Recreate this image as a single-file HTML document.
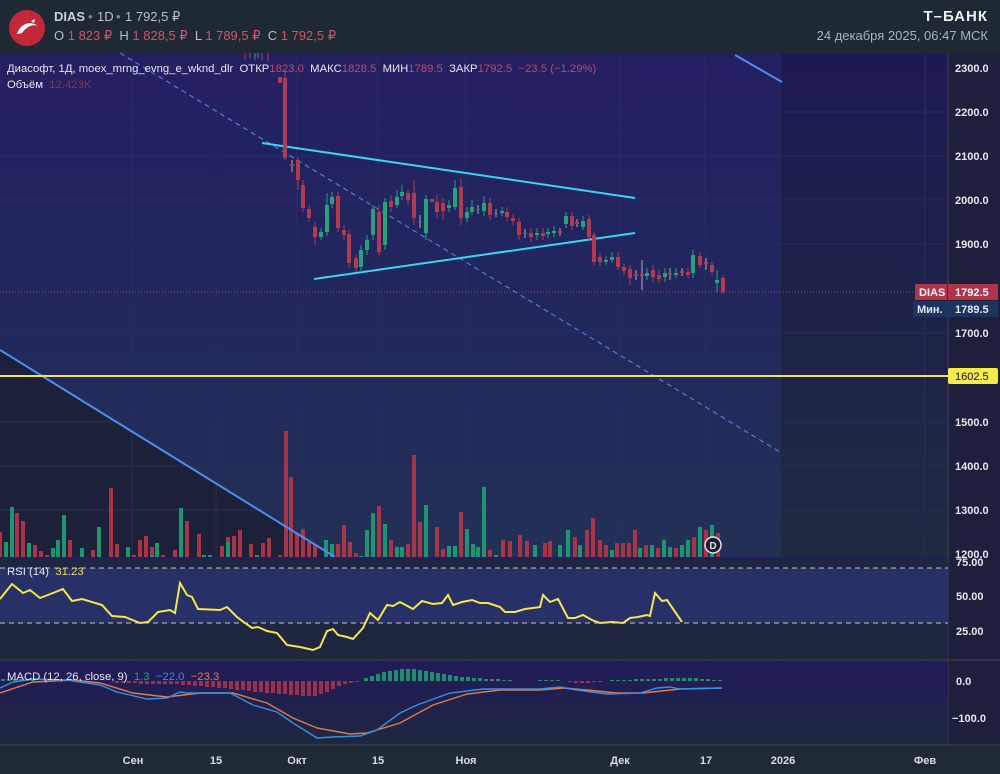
<!DOCTYPE html>
<html><head><meta charset="utf-8"><style>
body{margin:0;width:1000px;height:774px;overflow:hidden;background:#1f2a35;font-family:"Liberation Sans","DejaVu Sans",sans-serif}
svg{display:block}
text{white-space:pre}
</style></head><body>
<svg width="1000" height="774" xmlns="http://www.w3.org/2000/svg" font-family="Liberation Sans, DejaVu Sans, sans-serif" xml:space="preserve">
<defs>
<linearGradient id="mg" x1="0" y1="0" x2="0" y2="1">
<stop offset="0" stop-color="#241f63"/><stop offset="0.45" stop-color="#22265e"/><stop offset="1" stop-color="#223055"/>
</linearGradient>
<linearGradient id="fg" x1="0" y1="0" x2="0" y2="1">
<stop offset="0" stop-color="#1d1a52"/><stop offset="1" stop-color="#1f2a40"/>
</linearGradient>
<linearGradient id="mac" x1="0" y1="0" x2="0" y2="1">
<stop offset="0" stop-color="#211a5a"/><stop offset="1" stop-color="#1e2840"/>
</linearGradient>
</defs>
<rect x="0" y="0" width="1000" height="53" fill="#1f2933"/>
<circle cx="27" cy="28" r="18" fill="#c2283a"/>
<path d="M17 34 C20 24 30 20 38 26 C33 24 27 26 22 33 Z" fill="#fff"/>
<path d="M31 21 l4 -2 l-1 4z" fill="#fff"/>
<text x="54" y="21" font-size="13" font-weight="bold" fill="#c9cfd6">DIAS</text>
<text x="88" y="21" font-size="13" fill="#7f8a95">•</text>
<text x="97" y="21" font-size="13" fill="#b7bec6">1D</text>
<text x="116" y="21" font-size="13" fill="#7f8a95">•</text>
<text x="125" y="21" font-size="13" fill="#b7bec6">1 792,5 ₽</text>
<text x="54" y="40" font-size="13" fill="#b7bec6">O<tspan fill="#d45468"> 1 823 ₽</tspan>  H<tspan fill="#d45468"> 1 828,5 ₽</tspan>  L<tspan fill="#d45468"> 1 789,5 ₽</tspan>  C<tspan fill="#d45468"> 1 792,5 ₽</tspan></text>
<text x="988" y="21" font-size="15" font-weight="bold" fill="#eef0f2" text-anchor="end" letter-spacing="1">Т–БАНК</text>
<text x="988" y="40" font-size="13" fill="#aab3bd" text-anchor="end">24 декабря 2025, 06:47 МСК</text>

<rect x="0" y="53" width="948" height="504" fill="url(#mg)"/>
<rect x="780" y="53" width="168" height="504" fill="url(#fg)"/>
<polygon points="0,350 335,557 0,557" fill="#1d2039"/>
<rect x="948" y="53" width="52" height="692" fill="#1d1f3c"/>
<line x1="948" y1="53" x2="948" y2="774" stroke="#3a4258"/>
<g stroke="#2a3064" stroke-width="1" opacity="0.7">
<line x1="0" y1="112" x2="948" y2="112"/><line x1="0" y1="156" x2="948" y2="156"/><line x1="0" y1="200" x2="948" y2="200"/><line x1="0" y1="244" x2="948" y2="244"/><line x1="0" y1="333" x2="948" y2="333"/><line x1="0" y1="422" x2="948" y2="422"/><line x1="0" y1="466" x2="948" y2="466"/><line x1="0" y1="510" x2="948" y2="510"/>
<line x1="132" y1="53" x2="132" y2="745"/><line x1="216" y1="53" x2="216" y2="745"/><line x1="297" y1="53" x2="297" y2="745"/><line x1="378" y1="53" x2="378" y2="745"/><line x1="466" y1="53" x2="466" y2="745"/><line x1="620" y1="53" x2="620" y2="745"/><line x1="705" y1="53" x2="705" y2="745"/><line x1="780" y1="53" x2="780" y2="745"/><line x1="925" y1="53" x2="925" y2="745"/>
</g>

<path stroke="#a83448" stroke-width="4" d="M0 557V532M17 557V513M23 557V521M35 557V545M41 557V551M47 557V555M70 557V540M93 557V550M111 557V488M117 557V544M134 557V555M140 557V540M146 557V536M152 557V547M163 557V555M175 557V550M187 557V521M199 557V534M222 557V546M228 557V537M234 557V536M240 557V530M251 557V544M263 557V543M269 557V538M280 557V555M286 557V431M291 557V477M297 557V533M303 557V529M309 557V542M315 557V545M338 557V544M344 557V525M350 557V542M356 557V553M379 557V506M391 557V540M408 557V544M414 557V455M420 557V522M437 557V527M443 557V549M461 557V512M473 557V548M490 557V550M503 557V540M510 557V541M520 557V535M527 557V541M545 557V543M550 557V541M575 557V537M587 557V530M593 557V518M600 557V540M606 557V545M617 557V543M623 557V543M629 557V543M635 557V530M646 557V545M658 557V548M676 557V548M694 557V537M706 557V530M718 557V533"/>
<path stroke="#1f9470" stroke-width="4" d="M6 557V542M12 557V507M29 557V543M53 557V548M58 557V540M64 557V515M82 557V548M99 557V527M128 557V547M152 557V555M157 557V543M181 557V508M204 557V555M210 557V555M228 557V542M257 557V555M326 557V540M332 557V544M361 557V556M367 557V530M373 557V513M385 557V524M397 557V547M402 557V547M426 557V505M449 557V546M455 557V546M467 557V529M473 557V544M478 557V547M484 557V487M496 557V555M535 557V545M560 557V545M568 557V530M580 557V545M612 557V550M640 557V548M652 557V545M664 557V540M670 557V547M682 557V545M688 557V540M700 557V527M712 557V525"/>
<circle cx="713" cy="545" r="8" fill="#1a1f2e" stroke="#e6e6e6" stroke-width="1.5"/>
<text x="713" y="549" font-size="10" font-weight="bold" fill="#e6e6e6" text-anchor="middle">D</text>

<line x1="120" y1="53" x2="780" y2="452" stroke="#4f7fd8" stroke-width="1.2" stroke-dasharray="5,4"/>
<line x1="0" y1="350" x2="335" y2="557" stroke="#4b8ef0" stroke-width="2"/>
<line x1="735" y1="55" x2="782" y2="82" stroke="#4b8ef0" stroke-width="2"/>
<line x1="262" y1="143" x2="635" y2="198" stroke="#38d6f0" stroke-width="2"/>
<line x1="314" y1="279" x2="635" y2="233" stroke="#38d6f0" stroke-width="2"/>
<line x1="0" y1="292" x2="915" y2="292" stroke="#b04058" stroke-width="1" stroke-dasharray="1,2"/>

<g stroke-width="1">
<path stroke="#b03a4f" d="M285 70V160M298 158V190M303 180V212M309 205V222M315 222V245M338 192V232M344 225V240M349 230V268M356 255V272M379 205V255M391 195V212M408 190V205M414 180V225M437 195V218M443 198V220M461 178V225M490 198V220M507 207V222M513 214V225M519 218V240M531 228V242M543 228V240M572 212V230M589 215V240M594 232V266M600 253V266M618 252V270M624 263V275M630 265V285M653 265V282M659 270V283M688 268V278M700 252V268M712 262V275M723 275V294"/>
<path stroke="#26a17a" d="M321 228V240M327 193V236M332 192V208M361 245V272M367 235V255M373 205V240M385 198V250M397 190V208M402 185V200M426 195V240M449 200V212M455 180V210M467 207V222M472 200V215M484 196V216M502 207V216M537 228V240M548 228V238M554 226V237M566 212V228M583 216V230M606 256V265M612 252V263M647 268V280M665 268V282M676 268V278M693 250V278M717 270V292"/>
<path stroke="#aab" d="M292 160V172M420 215V228M478 205V214M496 209V217M525 229V238M560 228V236M577 219V227M636 270V280M642 260V290M670 268V280M682 268V276M706 258V270"/>
</g>
<g stroke-width="4">
<path stroke="#b03a4f" d="M280 77V83M285 78V158M292 164V166M298 160V180M303 185V208M309 209V218M315 227V237M338 196V228M344 230V235M349 234V263M356 258V268M379 212V252M391 201V207M408 193V200M414 193V218M420 221V222M432 199V202M437 202V212M443 203V211M461 187V218M478 209V210M490 203V215M496 213V214M507 212V217M513 218V221M519 222V235M525 233V234M531 233V237M543 233V236M560 231V233M572 216V226M577 222V224M589 219V237M594 235V262M600 257V262M618 257V267M624 267V271M630 269V278M636 274V276M642 274V276M653 270V277M659 275V279M670 273V275M682 271V273M688 272V275M700 256V265M706 262V264M712 265V272M723 278V292"/>
<path stroke="#26a17a" d="M321 232V237M327 205V232M332 197V204M361 250V267M367 240V250M373 209V235M385 202V245M397 197V205M402 192V196M426 199V233M449 205V208M455 188V207M467 212V218M472 207V212M484 203V211M502 211V213M537 233V235M548 232V234M554 231V233M566 216V224M583 221V227M606 260V262M612 257V260M647 273V276M665 273V277M676 273V275M693 255V273M717 280V283"/>
</g>
<path stroke="#b03a4f" stroke-width="1" d="M245 53V60M250 53V58M262 53V60M268 53V62"/>
<path stroke="#26a17a" stroke-width="1" d="M255 53V60M258 53V58"/>

<line x1="0" y1="376" x2="948" y2="376" stroke="#f0e05a" stroke-width="2"/>

<text x="7" y="72" font-size="11.3" fill="#e8e8f0">Диасофт, 1Д, moex_mrng_evng_e_wknd_dlr  ОТКР<tspan fill="#c04a60">1823.0</tspan>  МАКС<tspan fill="#c04a60">1828.5</tspan>  МИН<tspan fill="#c04a60">1789.5</tspan>  ЗАКР<tspan fill="#c04a60">1792.5  −23.5 (−1.29%)</tspan></text>
<text x="7" y="88" font-size="11.3" fill="#e8e8f0">Объём  <tspan fill="#8a3448">12.423K</tspan></text>

<g font-size="11" font-weight="bold" fill="#e6e8ee">
<text x="955" y="72">2300.0</text><text x="955" y="116">2200.0</text><text x="955" y="160">2100.0</text><text x="955" y="204">2000.0</text><text x="955" y="248">1900.0</text><text x="955" y="337">1700.0</text><text x="955" y="426">1500.0</text><text x="955" y="470">1400.0</text><text x="955" y="514">1300.0</text><text x="955" y="558">1200.0</text>
</g>
<rect x="915" y="284" width="32" height="16" fill="#b0344a"/>
<text x="919" y="296" font-size="11" font-weight="bold" fill="#fff">DIAS</text>
<rect x="948" y="284" width="50" height="16" fill="#b0344a"/>
<text x="955" y="296" font-size="11" font-weight="bold" fill="#fff">1792.5</text>
<rect x="913" y="301" width="85" height="16" fill="#1c3460"/>
<text x="917" y="313" font-size="11" font-weight="bold" fill="#e6e8ee">Мин.</text>
<text x="955" y="313" font-size="11" font-weight="bold" fill="#e6e8ee">1789.5</text>
<rect x="948" y="368" width="50" height="16" rx="2" fill="#f4ec4a"/>
<text x="955" y="380" font-size="11" fill="#111">1602.5</text>

<rect x="0" y="557" width="948" height="3" fill="#231c5e"/>
<rect x="0" y="560" width="948" height="100" fill="#1f2640"/>
<rect x="0" y="568" width="948" height="55" fill="#283068"/>
<line x1="0" y1="568" x2="948" y2="568" stroke="#c8c8b8" stroke-dasharray="5,4"/>
<line x1="0" y1="623" x2="948" y2="623" stroke="#c8c8b8" stroke-dasharray="5,4"/>
<polyline fill="none" stroke="#f4e64c" stroke-width="2" points="0,599 12,584 23,593 30,590 40,598 53,593 63,589 72,601 82,599 102,605 112,616 125,617 140,623 148,622 158,612 170,610 175,613 180,583 187,595 192,597 198,609 220,610 227,607 237,617 245,623 252,628 258,627 267,631 277,633 287,645 300,647 313,650 320,647 327,631 333,629 338,635 347,637 353,639 363,628 370,613 378,620 387,605 393,606 400,602 413,609 422,601 433,604 442,603 448,595 453,605 462,602 472,600 480,603 488,603 500,607 505,612 515,612 525,609 533,608 540,607 543,595 550,602 558,599 568,618 575,618 583,615 592,620 600,623 612,622 623,623 630,618 638,617 647,615 650,616 655,593 662,601 667,600 682,622"/>
<text x="7" y="575" font-size="11.3" fill="#e8e8f0">RSI (14)  <tspan fill="#e8dc5a">31.23</tspan></text>
<g font-size="11" font-weight="bold" fill="#e6e8ee">
<text x="956" y="566">75.00</text><text x="956" y="600">50.00</text><text x="956" y="635">25.00</text>
</g>
<line x1="0" y1="660" x2="1000" y2="660" stroke="#3a4258"/>

<rect x="0" y="661" width="948" height="84" fill="url(#mac)"/>
<path stroke="#1f8c6c" stroke-width="4" d="M3 681V679M9 681V679M15 681V679M21 681V679M27 681V680M33 681V680M366 681V678M372 681V676M378 681V674M384 681V672M390 681V671M396 681V670M402 681V669M408 681V669M414 681V669M420 681V670M426 681V671M432 681V672M438 681V673M444 681V674M450 681V675M456 681V676M462 681V677M468 681V677M474 681V678M480 681V678M486 681V679M492 681V679M498 681V679M504 681V680M510 681V680M540 681V680M546 681V680M552 681V680M558 681V680M612 681V680M618 681V680M624 681V680M630 681V680M636 681V679M642 681V679M648 681V679M654 681V679M660 681V679M666 681V678M672 681V678M678 681V678M684 681V678M690 681V678M696 681V678M702 681V679M708 681V679M714 681V680M720 681V680"/>
<path stroke="#9c2f4a" stroke-width="4" d="M117 681V683M123 681V683M129 681V683M135 681V683M141 681V684M147 681V684M153 681V684M159 681V684M165 681V684M171 681V684M177 681V684M183 681V685M189 681V685M195 681V686M201 681V686M207 681V687M213 681V687M219 681V688M225 681V688M231 681V689M237 681V690M243 681V690M249 681V691M255 681V692M261 681V692M267 681V693M273 681V693M279 681V694M285 681V694M291 681V695M297 681V695M303 681V696M309 681V696M315 681V696M321 681V694M327 681V692M333 681V689M339 681V686M345 681V684M351 681V683M357 681V682M570 681V682M576 681V683M582 681V683M588 681V683M594 681V682M600 681V682"/>
<polyline fill="none" stroke="#e07a4c" stroke-width="1.4" points="0,693 33,682 73,680 100,683 133,693 167,697 200,693 233,693 267,703 293,718 317,728 350,734 367,733 400,723 433,705 467,694 500,690 540,690 563,688 587,690 617,693 643,693 680,689 722,688"/>
<polyline fill="none" stroke="#3a8ee0" stroke-width="1.4" points="0,688 13,682 33,679 67,680 100,685 117,692 147,699 167,698 180,692 187,693 200,693 230,693 253,705 277,712 293,723 317,738 333,737 360,736 377,730 400,713 417,705 450,693 483,689 500,689 540,689 560,687 577,690 607,694 640,693 657,688 670,687 680,689 722,688"/>
<text x="7" y="680" font-size="11.3" fill="#e8e8f0">MACD (12, 26, close, 9)  <tspan fill="#26a17a">1.3</tspan>  <tspan fill="#3a8ee0">−22.0</tspan>  <tspan fill="#e07a4c">−23.3</tspan></text>
<g font-size="11" font-weight="bold" fill="#e6e8ee">
<text x="956" y="685">0.0</text><text x="952" y="722">−100.0</text>
</g>
<line x1="0" y1="745" x2="1000" y2="745" stroke="#3a4258"/>

<rect x="0" y="746" width="1000" height="28" fill="#1f2a35"/>
<g font-size="11" font-weight="bold" fill="#d8dce2" text-anchor="middle">
<text x="133" y="764">Сен</text><text x="216" y="764">15</text><text x="297" y="764">Окт</text><text x="378" y="764">15</text><text x="466" y="764">Ноя</text><text x="620" y="764">Дек</text><text x="706" y="764">17</text><text x="783" y="764">2026</text><text x="925" y="764">Фев</text>
</g>
</svg>
</body></html>
